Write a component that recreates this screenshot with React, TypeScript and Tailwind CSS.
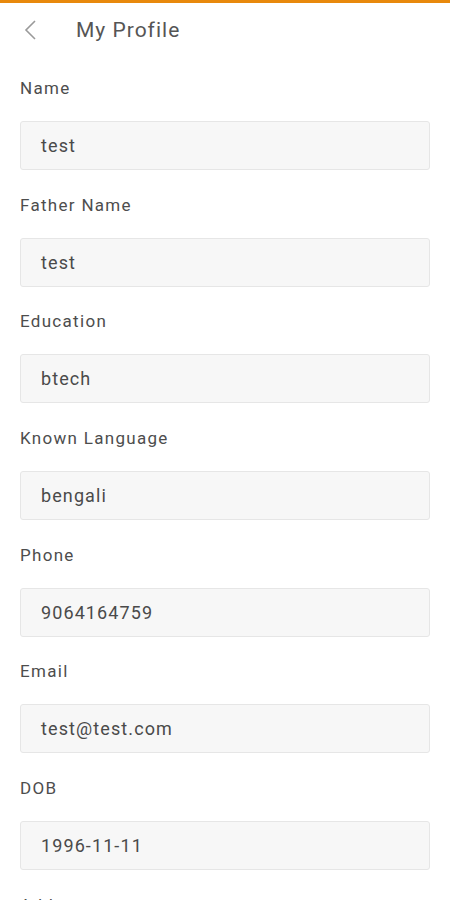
const fields = [
  { label: 'Name', value: 'test' },
  { label: 'Father Name', value: 'test' },
  { label: 'Education', value: 'btech' },
  { label: 'Known Language', value: 'bengali' },
  { label: 'Phone', value: '9064164759' },
  { label: 'Email', value: 'test@test.com' },
  { label: 'DOB', value: '1996-11-11' },
  { label: 'Address', value: 'kolkata' }
];

export default function App() {
  return (
    <div className="h-screen overflow-hidden bg-white font-['Roboto',sans-serif]">
      <div className="h-[3px] bg-[#e8890c]" />
      {/* Header */}
      <div className="flex items-center h-[54px]">
        <button className="pl-[23px] pr-[39px] text-[#9a9a9a]">
          <svg width="14" height="22" viewBox="0 0 14 22" fill="none">
            <path d="M12 2 L3 11 L12 20" stroke="currentColor" strokeWidth="1.6" />
          </svg>
        </button>
        <h1 className="text-[21px] tracking-[1px] text-[#555] leading-none">My Profile</h1>
      </div>

      <div className="px-5 pt-[19px]">
        {fields.map((f) => (
          <div key={f.label} className="h-[116.7px]">
            <div className="text-[17px] leading-6 tracking-[1.3px] text-[#4d4d4d]">{f.label}</div>
            <div className="mt-[21px] h-[49px] flex items-center px-5 bg-[#f7f7f7] border border-[#e6e6e6] rounded-[3px] text-[18px] tracking-[1.1px] text-[#4a4a4a]">
              {f.value}
            </div>
          </div>
        ))}
      </div>
    </div>
  );
}
